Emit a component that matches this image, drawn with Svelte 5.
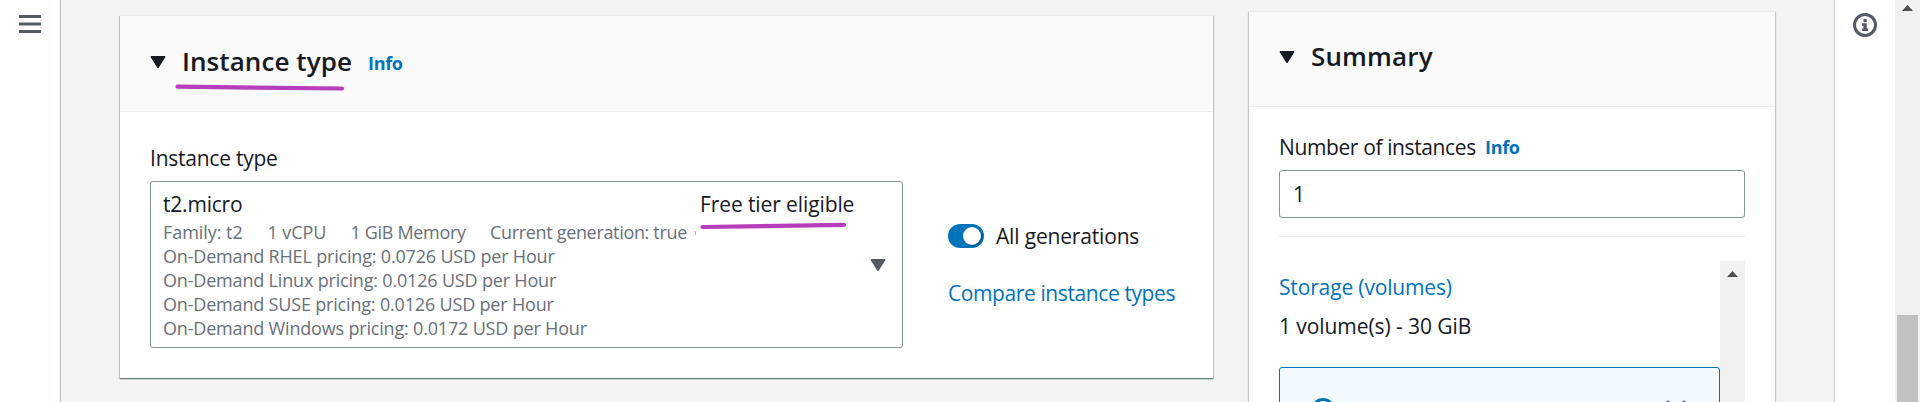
<script>
  const specs = [
    { text: 'Family: t2', width: 104.5, spacing: -0.05 },
    { text: '1 vCPU', width: 83, spacing: -0.1 },
    { text: '1 GiB Memory', width: 139.5, spacing: -0.33 },
    { text: 'Current generation: true', width: 200, spacing: -0.33 }
  ];
  const prices = [
    { os: 'RHEL', price: '0.0726' },
    { os: 'Linux', price: '0.0126' },
    { os: 'SUSE', price: '0.0126' },
    { os: 'Windows', price: '0.0172' }
  ];
</script>

{#snippet caret(cls)}
  <svg class={cls} viewBox="0 0 16 12" width="16" height="12" aria-hidden="true">
    <path d="M1.4 .9h13.2L8 11.2z" fill="currentColor" stroke="currentColor" stroke-width="1.6" stroke-linejoin="round" />
  </svg>
{/snippet}

<div class="page">
  <nav class="rail left">
    <svg width="22" height="20" viewBox="0 0 22 20" aria-label="Menu">
      <path d="M0 2.5h22M0 10h22M0 17.5h22" stroke="#545b64" stroke-width="3" />
    </svg>
  </nav>

  <main>
    <section class="card instance">
      <header>
        {@render caret('caret')}
        <h2>Instance type<svg class="mark title-mark" width="172" height="8" viewBox="0 0 172 8"><path d="M2.5 2.7L167 4.5" /></svg></h2>
        <a class="info" href="#info">Info</a>
      </header>
      <div class="body">
        <div class="field">
          <div class="label">Instance type</div>
          <div class="select">
            <div class="top">
              <span class="name">t2.micro</span>
              <span class="free">Free tier eligible<svg class="mark free-mark" width="148" height="8" viewBox="0 0 148 8"><path d="M2.5 5L144 2.8" /></svg></span>
            </div>
            <div class="row specs">
              {#each specs as s}
                <span style="width:{s.width}px;letter-spacing:{s.spacing}px">{s.text}</span>
              {/each}
              <i class="speck"></i>
            </div>
            {#each prices as p}
              <div class="row">On-Demand {p.os} pricing: {p.price} USD per Hour</div>
            {/each}
            {@render caret('arrow')}
          </div>
        </div>
        <div class="side">
          <div class="toggle-row"><span class="toggle"><b></b></span><span class="toggle-label">All generations</span></div>
          <a class="compare" href="#compare">Compare instance types</a>
        </div>
      </div>
    </section>

    <section class="card summary">
      <header>
        {@render caret('caret')}
        <h2>Summary</h2>
      </header>
      <div class="content">
        <div class="count"><span>Number of instances</span><a class="info" href="#info">Info</a></div>
        <div class="input">1</div>
        <div class="scroller">
          <div class="inner">
            <a class="storage" href="#storage">Storage (volumes)</a>
            <div class="volumes">1 volume(s) - 30 GiB</div>
            <div class="notice">
              <svg width="24" height="24" viewBox="0 0 24 24"><circle cx="12" cy="12" r="10.4" fill="none" stroke="#0073bb" stroke-width="3" /></svg>
              <svg class="close" width="20" height="20" viewBox="0 0 20 20"><path d="M2 2l16 16M18 2L2 18" stroke="#545b64" stroke-width="3" stroke-linecap="round" /></svg>
            </div>
          </div>
          <div class="bar">
            <svg width="11" height="6" viewBox="0 0 11 6"><path d="M5.5 0L11 6H0z" fill="#505050" /></svg>
          </div>
        </div>
      </div>
    </section>
  </main>

  <aside class="rail right">
    <svg width="24" height="24" viewBox="0 0 24 24" aria-label="Information">
      <circle cx="12" cy="12" r="10.5" fill="none" stroke="#545b64" stroke-width="3" />
      <path d="M10.5 6h3.2v3.2h-3.2zM9 10.3h4.7v5.2h1.4V18H9v-2.5h1.5V13H9z" fill="#545b64" />
    </svg>
  </aside>
  <div class="scrollbar">
    <svg width="11" height="6" viewBox="0 0 11 6"><path d="M5.5 0L11 6H0z" fill="#505050" /></svg>
    <div class="thumb"></div>
  </div>
</div>

<style>
  :global(body) { overflow: hidden; }
  * { box-sizing: border-box; }
  svg { display: block; flex: none; }
  .page {
    display: flex;
    height: 402px;
    overflow: hidden;
    background: #f2f3f3;
    color: #16191f;
    font: 21px/30px "Open Sans", "Noto Sans", sans-serif;
  }
  a { color: #0073bb; text-decoration: none; }
  .rail { background: #fff; flex: none; }
  .left { width: 61px; border-right: 1px solid #b9bebe; padding: 14px 0 0 19px; }
  .right { width: 61px; border-left: 1px solid #c9cdcd; padding: 13px 0 0 18px; }
  main { flex: 1; display: flex; align-items: flex-start; gap: 36px; padding-left: 59px; }
  .card {
    flex: none;
    background: #fff;
    border-top: 1px solid #eaeded;
    box-shadow: 0 1px 1px 0 rgba(0, 28, 36, .3), 1px 1px 1px 0 rgba(0, 28, 36, .15), -1px 1px 1px 0 rgba(0, 28, 36, .15);
  }
  .card header {
    display: flex;
    background: #fafafa;
    border-bottom: 1px solid #eaeded;
    height: 95px;
    padding: 26px 0 0 30px;
  }
  h2 { margin: 0 0 0 16px; font-size: 26px; line-height: 36px; font-weight: 650; letter-spacing: .15px; position: relative; }
  .caret { margin-top: 13px; }
  .info { font-size: 18px; font-weight: 700; letter-spacing: -.3px; }
  .instance { width: 1093px; height: 363px; margin-top: 15px; box-shadow: 0 1px 1px 0 #687b7b, 1px 1px 1px 0 rgba(0, 28, 36, .15), -1px 1px 1px 0 rgba(0, 28, 36, .15); }
  .card.instance header { height: 96px; padding-top: 27px; }
  .instance h2 { letter-spacing: .08px; width: 170px; white-space: nowrap; }
  .instance .info { margin: 5px 0 0 16px; line-height: 30px; }
  .mark { position: absolute; }
  .mark path { fill: none; stroke: #b83dba; stroke-width: 4.2; stroke-linecap: round; }
  .title-mark { left: -7px; top: 41px; }
  .free-mark { left: 0; top: 33px; }
  .body { display: flex; padding: 31px 0 0 30px; }
  .field { width: 753px; }
  .label { height: 38px; letter-spacing: -.24px; }
  .select {
    position: relative;
    height: 167px;
    border: 1px solid #879596;
    border-radius: 3px;
    padding: 7px 12px 0;
  }
  .top { display: flex; height: 30px; margin-bottom: 1px; }
  .name { width: 537px; letter-spacing: -.2px; }
  .free { position: relative; letter-spacing: -.1px; }
  .row { font-size: 18px; line-height: 24px; height: 24px; color: #687078; letter-spacing: -.18px; white-space: nowrap; }
  .specs { display: flex; }
  .specs span { flex: none; }
  .speck { width: 1px; height: 4px; margin: 11px 0 0 5px; background: #b4b8bc; }
  .arrow { position: absolute; right: 16px; top: 77px; color: #545b64; }
  .side { padding: 78px 0 0 45px; }
  .toggle-row { display: flex; align-items: center; height: 30px; }
  .toggle { width: 36px; height: 24px; border-radius: 12px; background: #0073bb; padding: 3px 3px 3px 15px; margin-right: 12px; }
  .toggle b { display: block; width: 18px; height: 18px; border-radius: 9px; background: #fff; box-shadow: 1px 1px 1px rgba(0, 0, 0, .35); }
  .toggle-label { letter-spacing: -.17px; }
  .compare { display: block; margin-top: 27px; letter-spacing: -.4px; white-space: nowrap; }
  .summary { width: 526px; height: 420px; margin-top: 11px; }
  .content { padding: 25px 30px 0; }
  .count { display: flex; height: 38px; letter-spacing: -.38px; white-space: nowrap; }
  .count span { width: 197px; }
  .count .info { margin: 0 0 0 9px; }
  .input { height: 48px; border: 1px solid #879596; border-radius: 3px; padding: 8px 13px; }
  .scroller { display: flex; margin-top: 18px; padding-top: 24px; border-top: 1px solid #eaeded; }
  .inner { width: 441px; padding-top: 11px; }
  .storage { display: block; letter-spacing: -.15px; }
  .volumes { margin-top: 9px; letter-spacing: -.07px; }
  .notice {
    display: flex;
    justify-content: space-between;
    height: 100px;
    margin-top: 26px;
    padding: 30px 33px 0 31px;
    border: 1px solid #0073bb;
    border-radius: 3px;
    background: #f1faff;
  }
  .close { margin-top: 2px; }
  .bar { width: 25px; height: 200px; background: #f1f1f1; padding: 10px 7px; }
  .scrollbar { flex: none; width: 25px; background: #f1f1f1; padding: 5px 2px 0; }
  .scrollbar svg { margin-left: 5px; }
  .thumb { height: 100px; margin-top: 304px; background: #c1c1c1; }
</style>
